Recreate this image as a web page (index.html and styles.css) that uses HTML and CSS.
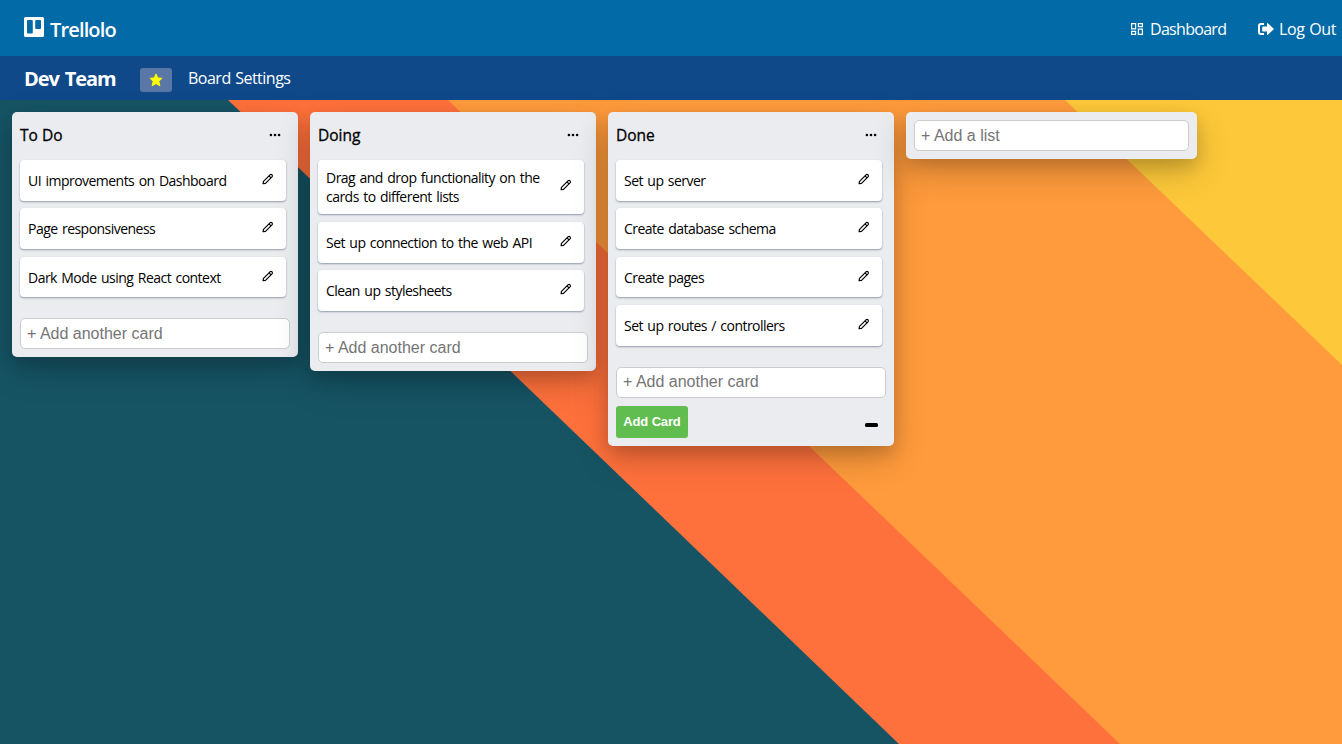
FILE: index.html
```
<!DOCTYPE html>
<html lang="en">
<head>
<meta charset="utf-8">
<title>Dev Team | Trellolo</title>
<link rel="stylesheet" href="styles.css">
</head>
<body>
<svg class="sprite" aria-hidden="true">
  <symbol id="pencil" viewBox="0 0 12 12">
    <path d="M1.100 10.700 L1.500 8.300 L8 1.800 Q9 .9 10 1.800 Q10.900 2.800 10 3.800 L3.500 10.300 Z M7 2.800 L9 4.800" fill="none" stroke="#000" stroke-width="1.200" stroke-linejoin="round"/>
  </symbol>
  <symbol id="dots" viewBox="0 0 12 4">
    <circle cx="1.900" cy="2" r="1.300"/><circle cx="6" cy="2" r="1.300"/><circle cx="10.100" cy="2" r="1.300"/>
  </symbol>
</svg>
<svg class="backdrop" viewBox="0 0 1342 644" preserveAspectRatio="none" aria-hidden="true">
  <rect width="1342" height="644" fill="#165464"/>
  <path d="M228 0H1342V644H899Z" fill="#ff713c"/>
  <path d="M448 0H1342V644H1120Z" fill="#ff9b3c"/>
  <path d="M1065 0H1342V265Z" fill="#fdc93a"/>
</svg>
<header class="topbar">
  <a class="brand">
    <svg class="brand-icon" viewBox="0 0 20 20"><path fill="#fff" fill-rule="evenodd" d="M1.500 0h17A1.500 1.500 0 0 1 20 1.500v17a1.500 1.500 0 0 1-1.500 1.500h-17A1.500 1.500 0 0 1 0 18.500v-17A1.500 1.500 0 0 1 1.500 0ZM4 3a1 1 0 0 0-1 1v11.500a1 1 0 0 0 1 1h3.800a1 1 0 0 0 1-1V4a1 1 0 0 0-1-1ZM12.200 3a1 1 0 0 0-1 1v7a1 1 0 0 0 1 1H16a1 1 0 0 0 1-1V4a1 1 0 0 0-1-1Z"/></svg>
    <span>Trellolo</span>
  </a>
  <nav class="nav">
    <a class="nav-link dash"><svg width="12" height="12" viewBox="0 0 12 12" fill="none" stroke="#fff" stroke-width="1.200"><path d="M.6.6h4v5.300h-4zM7.400.6h4v3h-4zM.6 8.400h4v3h-4zM7.400 6.100h4v5.300h-4z"/></svg><span>Dashboard</span></a>
    <a class="nav-link logout"><svg width="16" height="12" viewBox="0 0 16 12"><path d="M6 1H3Q1 1 1 3V9Q1 11 3 11H6" fill="none" stroke="#fff" stroke-width="2"/><path d="M9 .7Q9-.3 9.800.3L15.500 5.400Q16 6 15.500 6.600L9.800 11.700Q9 12.300 9 11.300V8.600H5Q4.200 8.600 4.200 7.800V4.200Q4.200 3.400 5 3.400H9Z" fill="#fff"/></svg><span>Log Out</span></a>
  </nav>
</header>
<div class="boardbar">
  <h1 class="board-name">Dev Team</h1>
  <button class="star"><svg width="14" height="14" viewBox="0 0 14 14"><path fill="#ff0" stroke="#ff0" stroke-linejoin="round" d="M7 .9 8.700 4.900 13 5.300 9.800 8.200 10.900 12.800 7 10.500 3.100 12.800 4.200 8.200 1 5.300 5.300 4.900Z"/></svg></button>
  <a class="settings">Board Settings</a>
</div>
<main class="board">
  <section class="list">
    <div class="list-head"><h2>To Do</h2><svg class="dots"><use href="#dots"/></svg></div>
    <div class="cards">
      <div class="card"><span>UI improvements on Dashboard</span><svg class="pencil"><use href="#pencil"/></svg></div>
      <div class="card"><span>Page responsiveness</span><svg class="pencil"><use href="#pencil"/></svg></div>
      <div class="card"><span>Dark Mode using React context</span><svg class="pencil"><use href="#pencil"/></svg></div>
    </div>
    <input class="field" placeholder="+ Add another card">
  </section>
  <section class="list">
    <div class="list-head"><h2>Doing</h2><svg class="dots"><use href="#dots"/></svg></div>
    <div class="cards">
      <div class="card tall"><span>Drag and drop functionality on the<br>cards to different lists</span><svg class="pencil"><use href="#pencil"/></svg></div>
      <div class="card"><span>Set up connection to the web API</span><svg class="pencil"><use href="#pencil"/></svg></div>
      <div class="card"><span>Clean up stylesheets</span><svg class="pencil"><use href="#pencil"/></svg></div>
    </div>
    <input class="field" placeholder="+ Add another card">
  </section>
  <section class="list">
    <div class="list-head"><h2>Done</h2><svg class="dots"><use href="#dots"/></svg></div>
    <div class="cards">
      <div class="card"><span>Set up server</span><svg class="pencil"><use href="#pencil"/></svg></div>
      <div class="card"><span>Create database schema</span><svg class="pencil"><use href="#pencil"/></svg></div>
      <div class="card"><span>Create pages</span><svg class="pencil"><use href="#pencil"/></svg></div>
      <div class="card"><span>Set up routes / controllers</span><svg class="pencil"><use href="#pencil"/></svg></div>
    </div>
    <input class="field" placeholder="+ Add another card">
    <div class="actions"><button class="add">Add Card</button><span class="minus"></span></div>
  </section>
  <section class="list new-list"><input class="field" placeholder="+ Add a list"></section>
</main>
</body>
</html>
```
FILE: styles.css
```
* { box-sizing: border-box; }
body { margin: 0; height: 744px; overflow: hidden; font-family: "Segoe UI", "Open Sans", "Noto Sans", sans-serif; color: #000; }
.sprite { position: absolute; width: 0; height: 0; }
.backdrop { position: absolute; z-index: -1; left: 0; top: 100px; width: 100%; height: 644px; }
.topbar { height: 56px; background: #026aa7; color: #fff; display: flex; justify-content: space-between; padding: 0 6px 0 24px; }
.brand { display: flex; gap: 6px; padding-top: 17px; font-size: 20px; font-weight: 600; line-height: 26px; }
.brand-icon { width: 20px; height: 20px; }
.brand span { width: 68px; letter-spacing: -.85px; white-space: nowrap; }
.nav { display: flex; gap: 31px; font-size: 16px; line-height: 22px; padding-top: 18px; }
.nav-link { display: flex; white-space: nowrap; }
.nav-link svg { margin-top: 5px; flex: none; }
.dash { gap: 7px; }
.dash span { width: 77px; letter-spacing: -.7px; }
.logout { gap: 5px; }
.logout span { width: 57px; letter-spacing: -.4px; word-spacing: 1px; }
.boardbar { height: 44px; background: #0f498a; color: #fff; display: flex; padding-left: 24px; }
.board-name { margin: 10px 0 0; width: 116px; font-size: 20px; line-height: 26px; letter-spacing: -1.100px; word-spacing: 2px; white-space: nowrap; }
.star { margin-top: 12px; width: 32px; height: 24px; padding: 0; border: 0; border-radius: 3px; background: #5b77a6; display: flex; align-items: center; justify-content: center; }
.settings { margin: 11px 0 0 16px; font-size: 16px; line-height: 22px; letter-spacing: -.5px; word-spacing: .8px; }
.board { display: flex; align-items: flex-start; gap: 12px; padding: 12px; }
.list { flex: none; width: 286px; padding: 8px; border-radius: 5px; background: #ebecf0; box-shadow: 0 13px 35px rgba(0,0,0,.2), 0 7px 15px rgba(0,0,0,.13); }
.list-head { display: flex; justify-content: space-between; height: 40px; padding-right: 9px; }
.list-head h2 { margin: 4px 0 0; font-size: 15.500px; line-height: 22px; font-weight: 500; -webkit-text-stroke: .3px #000; }
.dots { width: 12px; height: 4px; margin-top: 12.500px; }
.cards { display: flex; flex-direction: column; gap: 7.800px; width: 266px; margin-bottom: 21px; }
.card { display: flex; justify-content: space-between; height: 40.600px; padding: 11px 12px 0 8px; border-radius: 4px; background: #fff; box-shadow: 0 1px 2px rgba(9,30,66,.4); font-size: 14px; line-height: 19px; letter-spacing: -.53px; word-spacing: 1.300px; }
.card span { white-space: nowrap; }
.tall { height: 54.300px; padding-top: 8px; }
.pencil { width: 12px; height: 12px; flex: none; margin-top: 2px; }
.tall .pencil { margin-top: 11px; }
.field { display: block; width: 270px; height: 31px; padding: 0 6px; border: 1px solid #ccc; border-radius: 5px; background: #fff; font: 16px "Liberation Sans", Arial, sans-serif; }
.field::placeholder { color: #757575; opacity: 1; }
.actions { display: flex; justify-content: space-between; margin-top: 8.600px; padding-right: 8px; }
.add { width: 72px; height: 32px; padding: 0 0 2px; border: 0; border-radius: 3px; background: #61bd4f; color: #fff; font: bold 13px "Liberation Sans", Arial, sans-serif; letter-spacing: -.15px; white-space: nowrap; }
.minus { width: 13px; height: 4px; margin-top: 16.400px; border-radius: 1.500px; background: #000; }
.new-list { width: 291px; }
.new-list .field { width: 275px; }
```
